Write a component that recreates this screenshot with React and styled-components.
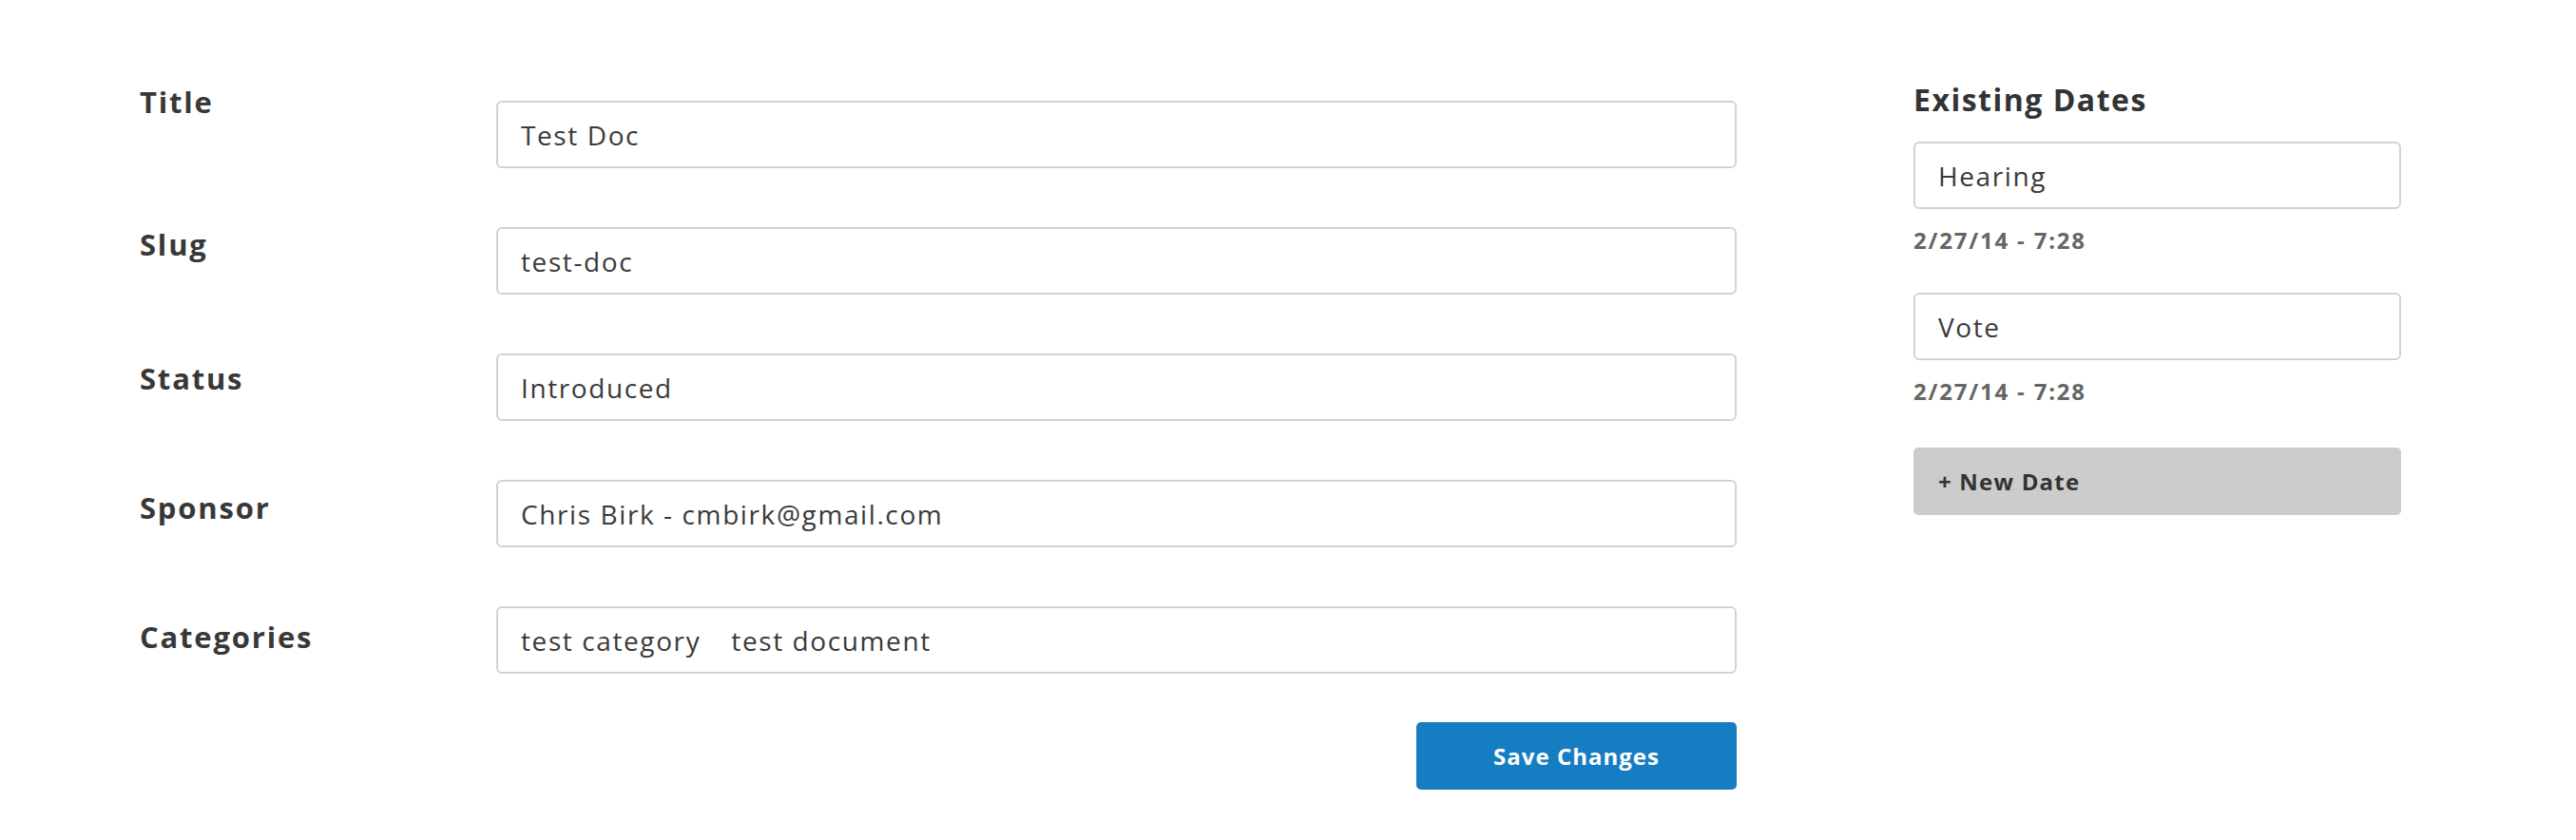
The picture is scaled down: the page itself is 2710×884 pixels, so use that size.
import React from 'react';
import styled, { createGlobalStyle } from 'styled-components';

const GlobalStyle = createGlobalStyle`
	body {
		margin: 0;
		background: #ffffff;
		font-family: "Open Sans", "Liberation Sans", sans-serif;
		color: #333333;
	}
`;

//Whole page: form on the left, dates on the right
const Page = styled.div`
	display: flex;
	align-items: flex-start;
	padding: 85px 0 0 147px;
`;

const FormColumn = styled.div`
	display: flex;
	flex-direction: column;
	width: 1680px;
	margin-top: 21px;
`;

const FormGrid = styled.div`
	display: grid;
	grid-template-columns: 375px 1305px;
	row-gap: 62px;
`;

const Label = styled.label`
	align-self: start;
	margin-top: ${(p) => p.$offset}px;
	font-size: 31px;
	font-weight: 700;
	line-height: 40px;
	letter-spacing: 1.8px;
	color: #383838;
`;

const fieldBox = `
	box-sizing: border-box;
	width: 100%;
	height: 71px;
	border: 2px solid #d3d3d3;
	border-radius: 6px;
	padding: 0 24px;
	background: #ffffff;
	font-family: "Open Sans", "Liberation Sans", sans-serif;
	font-size: 28px;
	font-weight: 400;
	letter-spacing: 1.6px;
	color: #3a3a3a;
	outline: none;
`;

const TextInput = styled.input`
	${fieldBox}
`;

const TagField = styled.div`
	${fieldBox}
	display: flex;
	align-items: center;
	gap: 32px;
`;

const Tag = styled.span`
	white-space: nowrap;
`;

const ButtonRow = styled.div`
	display: flex;
	justify-content: flex-end;
	margin-top: 51px;
`;

const SaveButton = styled.button`
	width: 337px;
	height: 71px;
	border: none;
	border-radius: 5px;
	background: #167dc2;
	color: #ffffff;
	font-family: "Open Sans", "Liberation Sans", sans-serif;
	font-size: 24px;
	font-weight: 700;
	letter-spacing: 1px;
	cursor: pointer;
`;

//Existing dates sidebar
const DatesColumn = styled.aside`
	display: flex;
	flex-direction: column;
	width: 513px;
	margin-left: 186px;
`;

const Heading = styled.h2`
	margin: 0 0 24px;
	font-size: 32px;
	font-weight: 700;
	line-height: 40px;
	letter-spacing: 1.5px;
	color: #333333;
`;

const DateStamp = styled.div`
	margin: 18px 0 40px;
	font-size: 24px;
	font-weight: 700;
	line-height: 30px;
	letter-spacing: 1.8px;
	color: #666666;
`;

const NewDateButton = styled.button`
	height: 71px;
	margin-top: 4px;
	border: none;
	border-radius: 5px;
	background: #cccccc;
	padding: 0 26px;
	text-align: left;
	font-family: "Open Sans", "Liberation Sans", sans-serif;
	font-size: 24px;
	font-weight: 700;
	letter-spacing: 1.2px;
	color: #333333;
	cursor: pointer;
`;

const fields = [
	{ label: 'Title', value: 'Test Doc', offset: -19 },
	{ label: 'Slug', value: 'test-doc', offset: -2 },
	{ label: 'Status', value: 'Introduced', offset: 6 },
	{ label: 'Sponsor', value: 'Chris Birk - cmbirk@gmail.com', offset: 9 },
];

const dates = [
	{ name: 'Hearing', when: '2/27/14 - 7:28' },
	{ name: 'Vote', when: '2/27/14 - 7:28' },
];

export default function App() {
	return (
		<>
			<GlobalStyle />
			<Page>
				<FormColumn>
					<FormGrid>
						{fields.map((f) => (
							<React.Fragment key={f.label}>
								<Label $offset={f.offset}>{f.label}</Label>
								<TextInput defaultValue={f.value} />
							</React.Fragment>
						))}
						<Label $offset={12}>Categories</Label>
						<TagField>
							<Tag>test category</Tag>
							<Tag>test document</Tag>
						</TagField>
					</FormGrid>
					<ButtonRow>
						<SaveButton>Save Changes</SaveButton>
					</ButtonRow>
				</FormColumn>
				<DatesColumn>
					<Heading>Existing Dates</Heading>
					{dates.map((d) => (
						<React.Fragment key={d.name}>
							<TextInput defaultValue={d.name} />
							<DateStamp>{d.when}</DateStamp>
						</React.Fragment>
					))}
					<NewDateButton>+ New Date</NewDateButton>
				</DatesColumn>
			</Page>
		</>
	);
}
